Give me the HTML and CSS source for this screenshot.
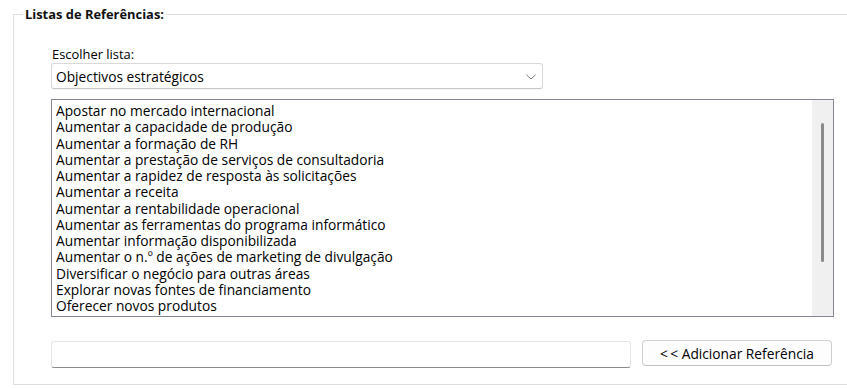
FILE: index.html
```html
<!DOCTYPE html>
<html lang="pt">
  <head>
    <meta charset="UTF-8" />
    <title>Listas de Referências</title>
    <link rel="stylesheet" href="styles.css">
  </head>
  <body>
    <fieldset class="group">
      <legend>Listas de Referências:</legend>

      <div class="group-body">
        <label class="field-label" for="listSelect">Escolher lista:</label>
        <div class="select">
          <span class="select-value" id="listSelect">Objectivos estratégicos</span>
          <svg class="chevron" width="10" height="6" viewBox="0 0 10 6">
            <path d="M0.5 0.8 L5 5 L9.5 0.8" fill="none" stroke="#777" stroke-width="1" />
          </svg>
        </div>

        <div class="listbox">
          <div class="list-items">
            <div>Apostar no mercado internacional</div>
            <div>Aumentar a capacidade de produção</div>
            <div>Aumentar a formação de RH</div>
            <div>Aumentar a prestação de serviços de consultadoria</div>
            <div>Aumentar a rapidez de resposta às solicitações</div>
            <div>Aumentar a receita</div>
            <div>Aumentar a rentabilidade operacional</div>
            <div>Aumentar as ferramentas do programa informático</div>
            <div>Aumentar informação disponibilizada</div>
            <div>Aumentar o n.º de ações de marketing de divulgação</div>
            <div>Diversificar o negócio para outras áreas</div>
            <div>Explorar novas fontes de financiamento</div>
            <div>Oferecer novos produtos</div>
          </div>
          <div class="scrollbar">
            <div class="thumb"></div>
          </div>
        </div>

        <div class="add-row">
          <input type="text" class="ref-input" />
          <button class="add-btn">&lt;&thinsp;&lt; Adicionar Referência</button>
        </div>
      </div>
    </fieldset>
  </body>
</html>
```

FILE: styles.css
```css
* {
  box-sizing: border-box;
  font-family: "Open Sans", "Noto Sans", sans-serif;
}

body {
  margin: 0;
  background: #fff;
  color: #000;
  font-size: 13.75px;
  overflow: hidden;
}

.group {
  margin: 6px -40px 0 13px;
  padding: 0 0 16px 0;
  border: 1px solid #dedede;
  min-width: 0;
}

.group legend {
  margin-left: 9px;
  padding: 0 2px;
  font-size: 12.9px;
  font-weight: bold;
  line-height: 16px;
  color: #111;
}

.group-body {
  padding: 24px 0 0 37px;
  width: 821px;
}

.field-label {
  display: block;
  font-size: 12.9px;
  line-height: 16px;
  padding-left: 1px;
}

.select {
  margin-top: 1px;
  width: 492px;
  height: 26px;
  border: 1px solid #d9d9d9;
  border-bottom-color: #c8c8c8;
  border-radius: 3px;
  display: flex;
  align-items: center;
  justify-content: space-between;
  padding: 0 6px 0 4px;
  box-shadow: 0 1px 0 rgba(0, 0, 0, 0.04);
}

.chevron {
  margin-top: 1px;
}

.listbox {
  margin-top: 10px;
  width: 783px;
  height: 218px;
  border: 1px solid #828790;
  display: flex;
}

.list-items {
  flex: 1;
  padding: 3px 0 0 4px;
  line-height: 16.25px;
  overflow: hidden;
}

.scrollbar {
  width: 21px;
  background: #f0f0f0;
  padding-top: 23px;
  display: flex;
  justify-content: center;
}

.thumb {
  width: 3px;
  height: 139px;
  background: #8a8a8a;
  border-radius: 2px;
}

.add-row {
  margin-top: 23px;
  display: flex;
  align-items: flex-start;
  gap: 11px;
}

.ref-input {
  width: 580px;
  height: 27px;
  margin-top: 1px;
  border: 1px solid #e5e5e5;
  border-bottom-color: #8c8c8c;
  border-radius: 3px;
  padding: 0 4px;
  font-size: 13.75px;
}

.add-btn {
  width: 190px;
  height: 26px;
  border: 1px solid #d0d0d0;
  border-bottom-color: #c0c0c0;
  border-radius: 4px;
  background: #fdfdfd;
  font-size: 13.75px;
  color: #000;
  padding: 0;
}
```
